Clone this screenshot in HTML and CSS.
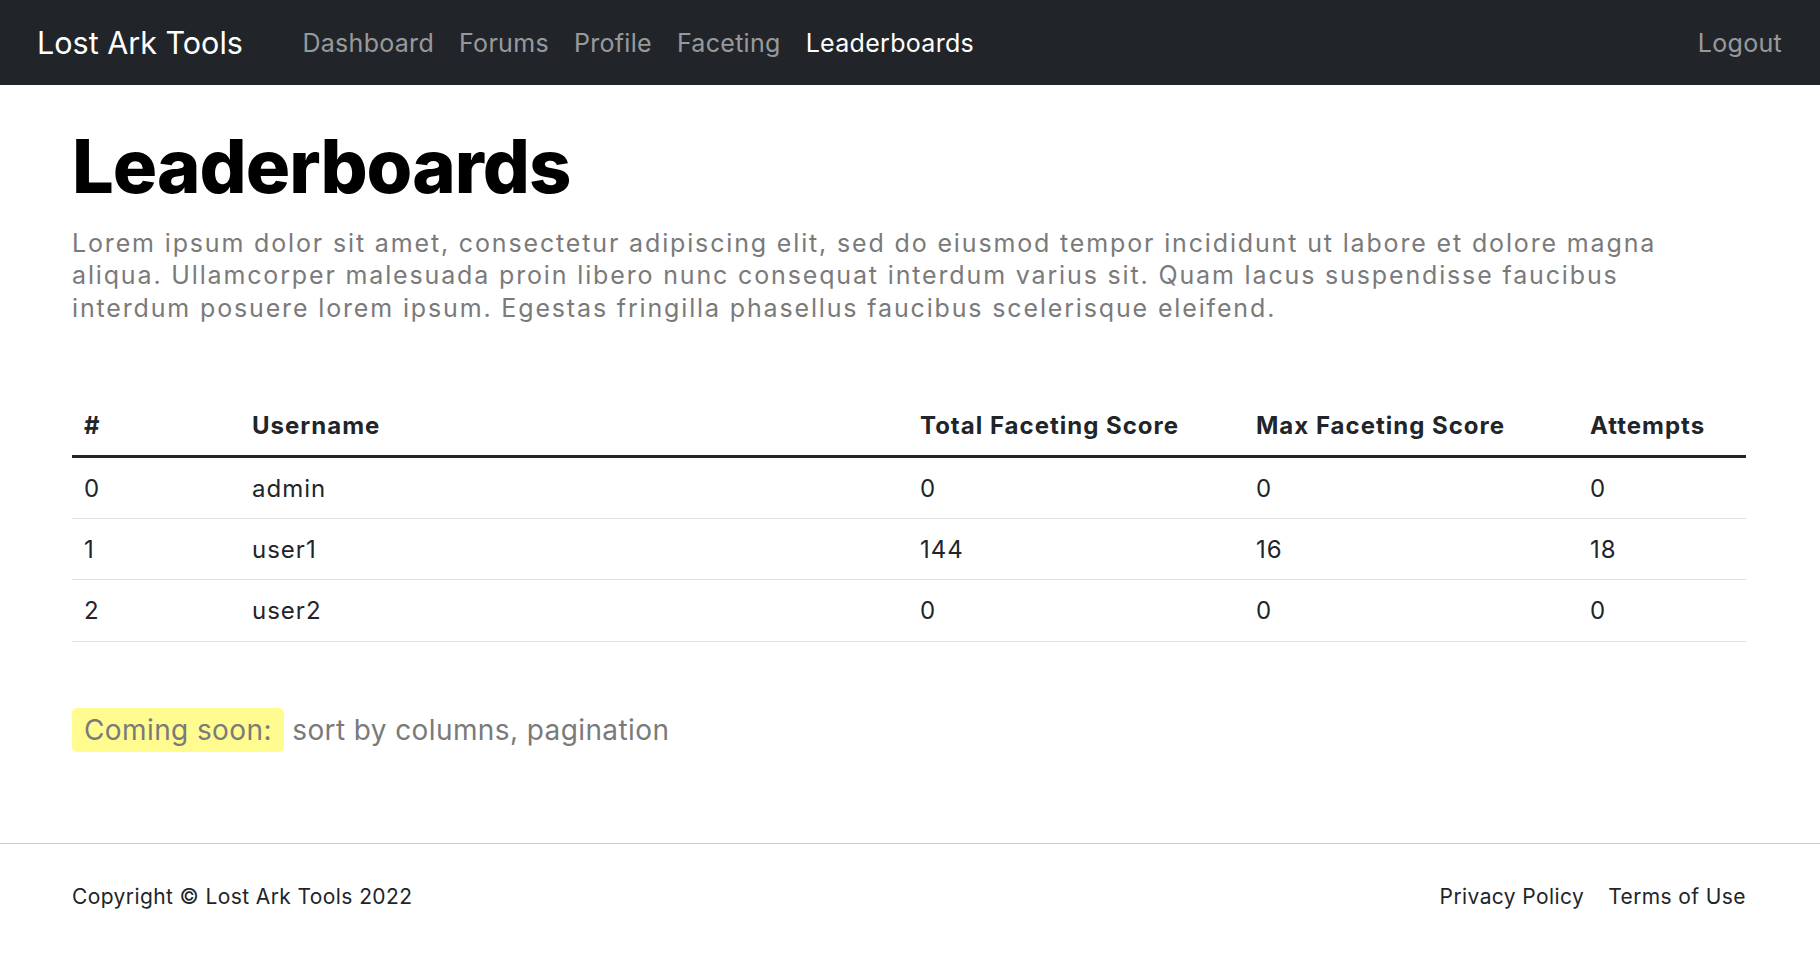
FILE: index.html
```html
<!DOCTYPE html>
<html lang="en">
<head>
<meta charset="utf-8">
<title>Leaderboards - Lost Ark Tools</title>
<link rel="stylesheet" href="styles.css">
</head>
<body>
<nav class="navbar">
  <a class="brand" href="#">Lost Ark Tools</a>
  <ul class="nav-links">
    <li><a class="nav-link" href="#">Dashboard</a></li>
    <li><a class="nav-link" href="#">Forums</a></li>
    <li><a class="nav-link" href="#">Profile</a></li>
    <li><a class="nav-link" href="#">Faceting</a></li>
    <li><a class="nav-link active" href="#">Leaderboards</a></li>
  </ul>
  <a class="nav-link logout" href="#">Logout</a>
</nav>
<main class="content">
  <h1 class="title">Leaderboards</h1>
  <p class="lead">Lorem ipsum dolor sit amet, consectetur adipiscing elit, sed do eiusmod tempor incididunt ut labore et dolore magna aliqua. Ullamcorper malesuada proin libero nunc consequat interdum varius sit. Quam lacus suspendisse faucibus interdum posuere lorem ipsum. Egestas fringilla phasellus faucibus scelerisque eleifend.</p>
  <table class="board">
    <thead>
      <tr>
        <th class="c-rank">#</th>
        <th class="c-user">Username</th>
        <th class="c-total">Total Faceting Score</th>
        <th class="c-max">Max Faceting Score</th>
        <th class="c-att">Attempts</th>
      </tr>
    </thead>
    <tbody>
      <tr><td>0</td><td>admin</td><td>0</td><td>0</td><td>0</td></tr>
      <tr><td>1</td><td>user1</td><td>144</td><td>16</td><td>18</td></tr>
      <tr><td>2</td><td>user2</td><td>0</td><td>0</td><td>0</td></tr>
    </tbody>
  </table>
  <p class="soon"><mark class="soon-tag">Coming soon:</mark> sort by columns, pagination</p>
</main>
<footer class="footer">
  <span class="copy">Copyright © Lost Ark Tools 2022</span>
  <div class="footer-links">
    <a href="#">Privacy Policy</a>
    <a href="#">Terms of Use</a>
  </div>
</footer>
</body>
</html>
```
FILE: styles.css
```css
* { box-sizing: border-box; }
html, body { margin: 0; padding: 0; }
body {
  font-family: Inter, "Noto Sans", sans-serif;
  color: #212529;
  background: #fff;
}
a { text-decoration: none; color: inherit; }

.navbar {
  height: 85px;
  background: #212529;
  display: flex;
  align-items: center;
  padding: 0 38px 0 37px;
}
.brand {
  color: #fff;
  font-size: 30.5px;
  font-weight: 400;
  margin-right: 47px;
}
.nav-links {
  list-style: none;
  margin: 0;
  padding: 0;
  display: flex;
  flex: 1;
}
.nav-link {
  display: block;
  font-size: 25px;
  letter-spacing: 0.3px;
  color: rgba(255,255,255,.55);
  padding: 0 12.5px;
}
.nav-link.active { color: #fff; }
.logout { padding-right: 0; }

.content {
  padding: 0 74px 0 72px;
}
.title {
  font-size: 74px;
  font-weight: 800;
  letter-spacing: -1px;
  line-height: 1.2;
  margin: 37px 0 16px;
  color: #000;
}
.lead {
  font-size: 25px;
  letter-spacing: 1.85px;
  line-height: 32.5px;
  color: #7a7a7a;
  max-width: 1620px;
  margin: 0 0 71px;
}
.board {
  width: 100%;
  border-collapse: collapse;
  font-size: 24px;
  letter-spacing: 1px;
}
.board th, .board td {
  text-align: left;
  padding: 0 12px;
  height: 61.5px;
  border-bottom: 1px solid #dee2e6;
}
.board th {
  font-weight: 700;
  border-bottom: 3px solid #212529;
}
.c-rank { width: 168px; }
.c-user { width: 668px; }
.c-total { width: 336px; }
.c-max { width: 334px; }

.soon {
  margin: 66px 0 91px;
  font-size: 28px;
  letter-spacing: 0.4px;
  line-height: 44px;
  color: #7a7a7a;
}
.soon-tag {
  background: #fffb8f;
  color: #7a7a7a;
  padding: 5px 12px;
  border-radius: 5px;
}

.footer {
  border-top: 1px solid #ccc;
  padding: 40px 74px 40px 72px;
  display: flex;
  justify-content: space-between;
  align-items: center;
  font-size: 21px;
  letter-spacing: 0.4px;
}
.footer-links { display: flex; gap: 24px; }
```
